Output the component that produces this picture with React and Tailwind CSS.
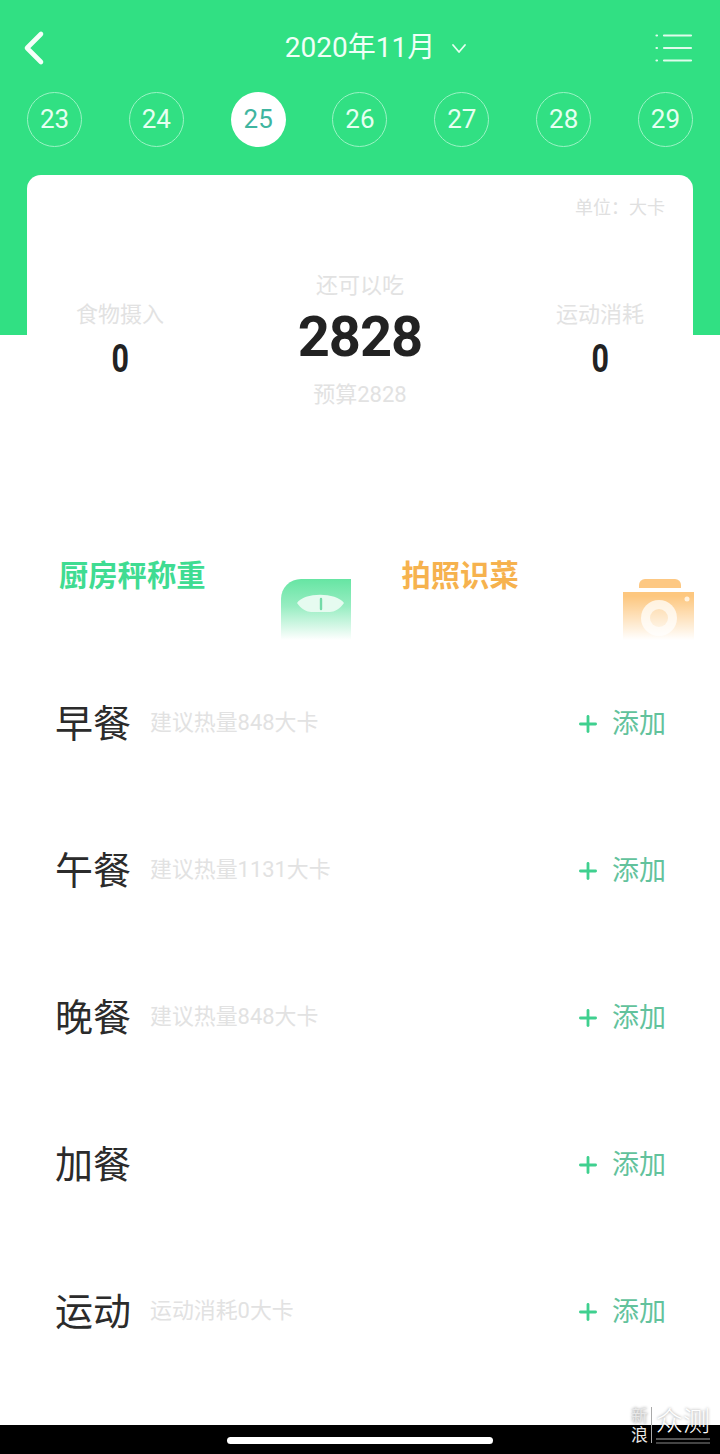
import React from 'react';
import { Plus } from 'lucide-react';

const DAYS = [23, 24, 25, 26, 27, 28, 29];

const MEALS = [
    { name: '早餐', hint: '建议热量848大卡' },
    { name: '午餐', hint: '建议热量1131大卡' },
    { name: '晚餐', hint: '建议热量848大卡' },
    { name: '加餐', hint: '' },
    { name: '运动', hint: '运动消耗0大卡' }
];

const FONT = "font-['Roboto','Noto_Sans_CJK_SC',sans-serif]";

function BackIcon() {
    return (
        <svg className="-ml-[4px]" width="24" height="36" viewBox="0 0 24 36" fill="none">
            <path d="M18 4 L4 18 L18 32" stroke="#f4fff9" strokeWidth="4.6" strokeLinecap="round" strokeLinejoin="round" />
        </svg>
    );
}

function ListIcon() {
    return (
        <svg width="38" height="30" viewBox="0 0 38 30" fill="none" stroke="#dffbec" strokeWidth="2.2" strokeLinecap="round">
            <path d="M9 2.5 H36 M9 15 H36 M9 27.5 H36" />
            <path d="M1.5 2.5 H2 M1.5 15 H2 M1.5 27.5 H2" />
        </svg>
    );
}

function ScaleIcon() {
    return (
        <svg width="72" height="62" viewBox="0 0 72 62">
            <defs>
                <linearGradient id="scaleFill" x1="0" y1="0" x2="0" y2="1">
                    <stop offset="0" stopColor="#66e5a3" />
                    <stop offset="0.45" stopColor="#98edc2" />
                    <stop offset="1" stopColor="#ffffff" />
                </linearGradient>
            </defs>
            <path d="M21 1 H71 V62 H1 V21 A20 20 0 0 1 21 1 Z" fill="url(#scaleFill)" />
            <path d="M17 25 C24 14 56 14 64 25 C60 31 54 34 50 34 H31 C27 34 21 31 17 25 Z" fill="#e6fbf0" />
            <path d="M41 21 V31" stroke="#74dba8" strokeWidth="2.4" strokeLinecap="round" />
        </svg>
    );
}

function CameraIcon() {
    return (
        <svg width="73" height="62" viewBox="0 0 73 62">
            <defs>
                <linearGradient id="cameraFade" x1="0" y1="0" x2="0" y2="1">
                    <stop offset="0" stopColor="#ffffff" stopOpacity="0" />
                    <stop offset="1" stopColor="#ffffff" />
                </linearGradient>
            </defs>
            <path d="M17 7 A6 6 0 0 1 23 1 H53 A6 6 0 0 1 59 7 V10 H17 Z" fill="#fdc883" />
            <rect x="1" y="14" width="71" height="48" fill="#fdc77f" />
            <circle cx="37" cy="40" r="18" fill="#fff1dc" />
            <circle cx="37" cy="40" r="9" fill="#fdd49c" />
            <circle cx="65" cy="21" r="2.5" fill="#fff1dc" />
            <rect x="0" y="18" width="73" height="44" fill="url(#cameraFade)" />
        </svg>
    );
}

function Stat({ label, value }) {
    return (
        <div className="w-[160px] flex flex-col items-center">
            <span className="text-[22px] leading-[30px] text-[#e2e2e2]">{label}</span>
            <span className="mt-[8px] text-[39px] leading-[42px] font-bold text-[#222222] scale-x-[0.78]">{value}</span>
        </div>
    );
}

function MealRow({ name, hint }) {
    return (
        <div className="h-[147px] flex items-center pl-[55px] pr-[54px]">
            <span className="text-[38px] leading-[50px] text-[#2b2b2b]">{name}</span>
            <span className="ml-[19px] text-[21.9px] text-[#e2e2e2]">{hint}</span>
            <div className="ml-auto flex items-center">
                <Plus size={26} strokeWidth={2.6} className="text-[#3fd08f]" />
                <span className="ml-[11px] mt-[2px] text-[27px] text-[#62c29c]">添加</span>
            </div>
        </div>
    );
}

export default function App() {
    return (
        <div className={`relative w-[720px] h-[1454px] bg-white flex flex-col overflow-hidden ${FONT}`}>
            <div className="h-[335px] shrink-0 bg-[#31e083] px-[27px] pt-[29px]">
                <div className="h-[38px] flex items-center justify-between">
                    <div className="w-[38px]"><BackIcon /></div>
                    <div className="relative text-[#f0fff7]">
                        <span className="block text-[28px] leading-[38px]">2020年11月</span>
                        <svg className="absolute left-[166px] top-[14px]" width="16" height="12" viewBox="0 0 16 12" fill="none">
                            <path d="M2 2 L8 9 L14 2" stroke="#e6fff1" strokeWidth="1.8" strokeLinecap="round" strokeLinejoin="round" />
                        </svg>
                    </div>
                    <ListIcon />
                </div>

                <div className="mt-[25px] flex justify-between">
                    {DAYS.map(day => (
                        <div
                            key={day}
                            className={day === 25
                                ? 'w-[55px] h-[55px] rounded-full bg-white text-[#3fb5a0] flex items-center justify-center text-[26px]'
                                : 'w-[55px] h-[55px] rounded-full border-[1.5px] border-[#9af3c4] text-[#e6fff1] flex items-center justify-center text-[26px]'}
                        >
                            {day}
                        </div>
                    ))}
                </div>

                <div className="mt-[28px] h-[360px] bg-white rounded-[14px] px-[28px] pt-[21px]">
                    <div className="text-right text-[18px] leading-[24px] text-[#e0e0e0]">单位：大卡</div>
                    <div className="mt-[51px] flex justify-between items-start -mx-[15px]">
                        <div className="pt-[29px]"><Stat label="食物摄入" value="0" /></div>
                        <div className="flex flex-col items-center">
                            <span className="text-[22px] leading-[30px] text-[#e2e2e2]">还可以吃</span>
                            <span className="mt-[4px] text-[56px] leading-[64px] tracking-[-1px] font-bold text-[#222222]">2828</span>
                            <span className="mt-[11px] text-[22px] leading-[30px] text-[#e2e2e2]">预算2828</span>
                        </div>
                        <div className="pt-[29px]"><Stat label="运动消耗" value="0" /></div>
                    </div>
                </div>
            </div>

            <div className="mt-[219px] h-[96px] shrink-0 flex items-start pl-[59px] pr-[25px] pt-[2px]">
                <span className="text-[29.3px] leading-[40px] font-bold text-[#3fdc92]">厨房秤称重</span>
                <div className="ml-[75px] mt-[22px]"><ScaleIcon /></div>
                <span className="ml-[49px] text-[29.3px] leading-[40px] font-bold text-[#f6b24e]">拍照识菜</span>
                <div className="ml-auto mt-[22px]"><CameraIcon /></div>
            </div>

            <div className="flex flex-col">
                {MEALS.map(meal => (
                    <MealRow key={meal.name} name={meal.name} hint={meal.hint} />
                ))}
            </div>

            <div className="mt-auto h-[29px] shrink-0 bg-black flex justify-center pt-[12px]">
                <div className="w-[266px] h-[7px] rounded-full bg-white" />
            </div>

            <div className="absolute left-[631px] top-[1407px] flex items-start [text-shadow:0_0_3px_rgba(0,0,0,0.45)]">
                <div className="w-[18px] flex flex-col text-[17px] leading-[19px] text-[#e8e8e8]">
                    <span>新</span>
                    <span>浪</span>
                </div>
                <div className="ml-[2px] w-px h-[36px] bg-[#aaaaaa]" />
                <div className="ml-[4px] flex flex-col">
                    <span className="text-[27px] leading-[30px] font-light text-white">众测</span>
                    <span className="mt-[1px] h-[2px] bg-[#555555]" />
                    <span className="mt-[2px] h-[2px] bg-[#444444]" />
                </div>
            </div>
        </div>
    );
}
